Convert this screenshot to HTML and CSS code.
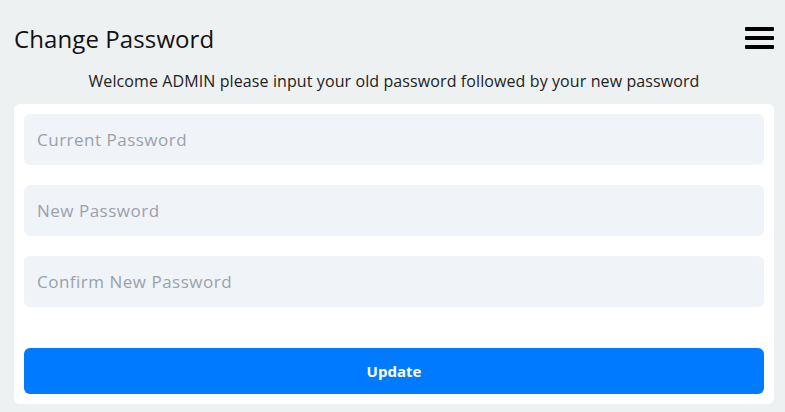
FILE: index.html
```html
<!DOCTYPE html>
<html>
<head>
<meta charset="utf-8">
<link rel="stylesheet" href="styles.css">
</head>
<body>
<div class="page">
  <header class="top">
    <h1 class="title">Change Password</h1>
    <button class="menu" aria-label="menu">
      <svg width="29" height="24" viewBox="0 0 29 24"><rect x="0" y="1" width="29" height="4" rx="1" fill="#000"/><rect x="0" y="10" width="29" height="4" rx="1" fill="#000"/><rect x="0" y="19" width="29" height="4" rx="1" fill="#000"/></svg>
    </button>
  </header>
  <p class="welcome">Welcome ADMIN please input your old password followed by your new password</p>
  <form class="card">
    <input class="field" type="password" placeholder="Current Password">
    <input class="field" type="password" placeholder="New Password">
    <input class="field" type="password" placeholder="Confirm New Password">
    <button class="update" type="button">Update</button>
  </form>
</div>
</body>
</html>
```
FILE: styles.css
```css
html, body {
  margin: 0;
  padding: 0;
  background: #eef1f2;
}
.page {
  padding: 0 11px 0 14px;
  font-family: "Open Sans", "Noto Sans", sans-serif;
}
.top {
  display: flex;
  justify-content: space-between;
  align-items: center;
  height: 76px;
}
.title {
  margin: 0;
  font-family: "Open Sans", sans-serif;
  font-weight: 400;
  font-size: 24px;
  letter-spacing: 0.1px;
  color: #111;
}
.menu {
  border: 0;
  background: none;
  padding: 0;
  margin: 0;
  display: flex;
}
.welcome {
  margin: -6px 0 0;
  text-align: center;
  font-size: 16px;
  letter-spacing: 0.1px;
  color: #222;
  line-height: 22px;
  height: 34px;
}
.card {
  background: #fff;
  border-radius: 6px;
  padding: 10px;
  display: flex;
  flex-direction: column;
  gap: 20px;
}
.field {
  height: 51px;
  border: 0;
  border-radius: 6px;
  background: #f0f3f8;
  padding: 0 13px;
  font-family: "Open Sans", sans-serif;
  font-size: 17px;
  letter-spacing: 0.5px;
  color: #333;
  outline: none;
}
.field::placeholder {
  color: #9ba1ab;
}
.update {
  margin-top: 21px;
  height: 46px;
  border: 0;
  border-radius: 6px;
  background: #007bff;
  color: #fff;
  font-family: "Open Sans", sans-serif;
  font-weight: 700;
  font-size: 15px;
}
```
